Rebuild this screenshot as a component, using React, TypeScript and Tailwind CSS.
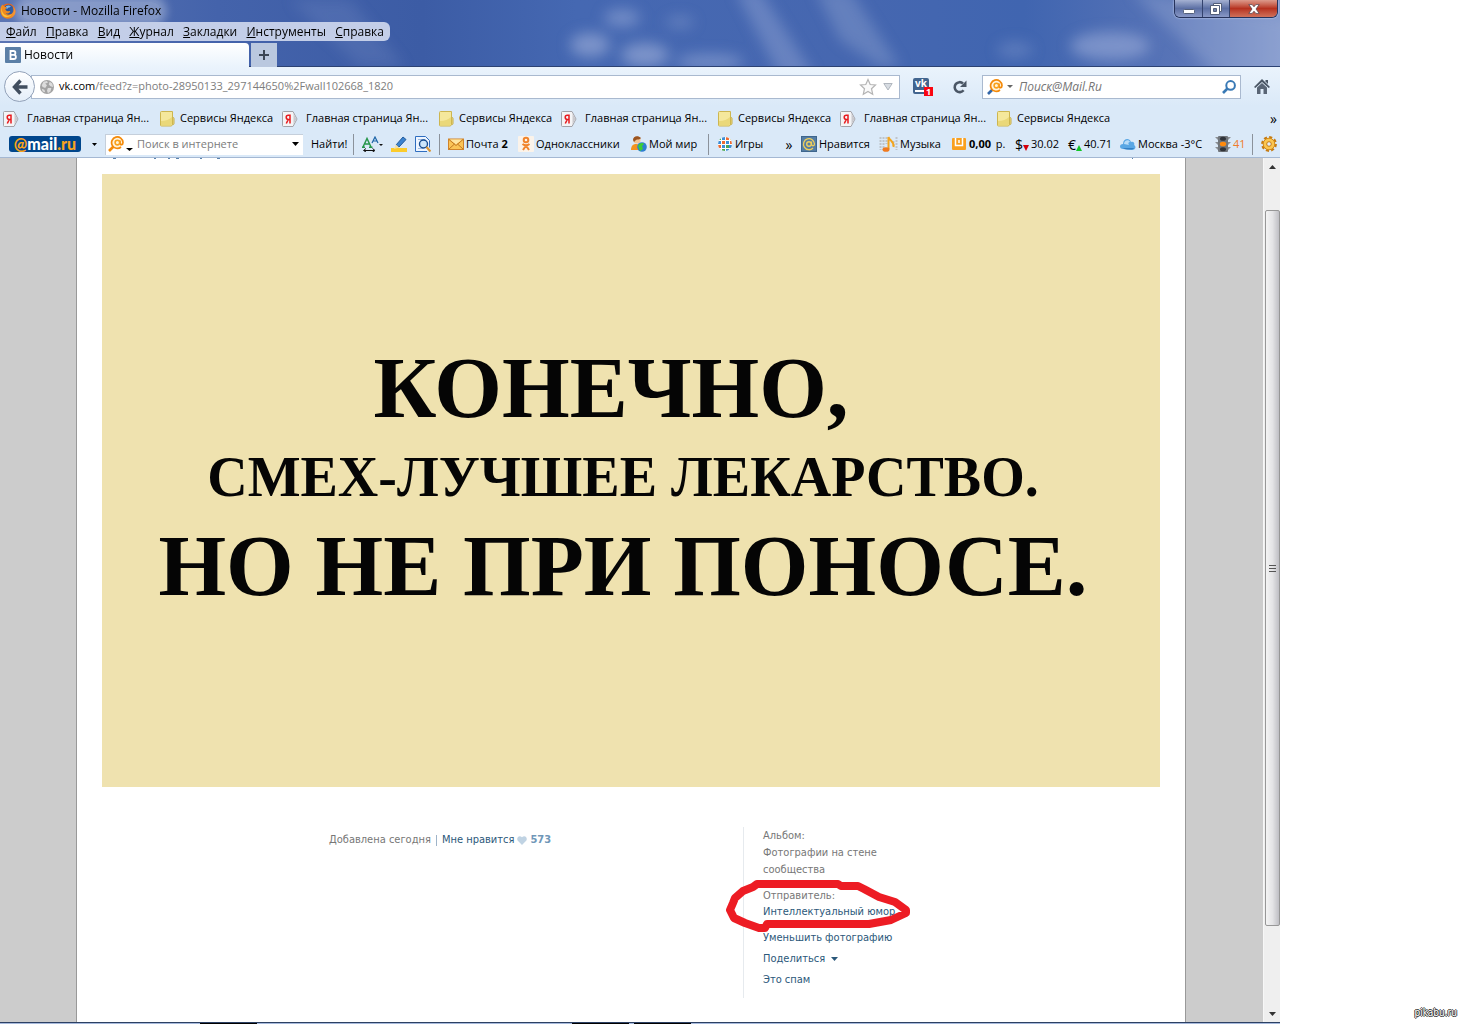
import type { ReactNode } from "react";

const menu = ["Файл", "Правка", "Вид", "Журнал", "Закладки", "Инструменты", "Справка"];

const bookmarks = [0, 1, 2, 3];

function FirefoxIcon() {
  return (
    <svg className="h-4 w-4 shrink-0" viewBox="0 0 16 16" aria-hidden="true">
      <circle cx="8" cy="8" r="7.6" fill="#e4661b" />
      <circle cx="8.6" cy="6.8" r="5" fill="#28549b" />
      <path d="M6 3c2-1 4-.6 5 .4-1 .2-1 1-2 1.200-1.500.2-1 1.400-2.400 1.600z" fill="#7fb4e8" />
      <path d="M.6 5C1 3.500 2 2 3 1.600c0 1 .6 1.600 1.600 1.800L7 4.500 5.400 6c.2 1.600 1.600 2.600 3.600 2 1-.2 1.600.4 1 1-1.200 1.600-3 1.800-4.400 1.200 2 2.600 6.400 2 7.800-1.400.6-1.800.2-3.600-.4-4.800 2.200 1.800 2.800 4.400 2 6.800-1.200 3.200-4 4.800-7 4.800C3.600 15.600-.6 11.500.6 5z" fill="#f08a1e" />
      <path d="M2 4c-.6 2.600.2 5.600 2 7.200 2.400 2 6 2 8-.2-1.800 3.400-6.400 4-9 1.400C1 10.500.8 6.500 2 4z" fill="#fbc53c" />
    </svg>
  );
}

function GlobeIcon() {
  return (
    <svg className="h-[14px] w-[14px] shrink-0" viewBox="0 0 16 16" aria-hidden="true">
      <circle cx="8" cy="8" r="8" fill="#a3a3a3" />
      <path d="M2 6l2-4 4-1 1 2-3 1 2 2-2 3-3-1zM11 2l3 2 1 4-3-1-2-2zM9 9l4 0-1 4-3 2-1-3zM2 10l3 1 1 3-3-1z" fill="#dcdcdc" />
    </svg>
  );
}

function YandexIcon() {
  return (
    <svg className="h-4 w-4 shrink-0" viewBox="0 0 16 16" aria-hidden="true">
      <path d="M1.500.5h9.500l4 7.500-4 7.500H1.500a1 1 0 0 1-1-1v-13a1 1 0 0 1 1-1z" fill="#f4f4f6" stroke="#a2a2a8" />
      <path d="M11.500 2.500l3 5.500-3 5.500z" fill="#c9c9ce" />
      <path d="M8 3.500v9M8 4.200H6.300a2 2 0 0 0 0 4.200H8M6.300 8.400L4.300 12.500" fill="none" stroke="#e8191d" strokeWidth="1.500" />
    </svg>
  );
}

function FolderIcon() {
  return (
    <svg className="h-4 w-4 shrink-0" viewBox="0 0 16 16" aria-hidden="true">
      <path d="M10 6.500h3a1 1 0 0 1 1 1v5a1 1 0 0 1-1 1h-3z" fill="#efdf8a" stroke="#c5ac45" />
      <path d="M.5 1.500a1 1 0 0 1 1-1h11v13l-1 1.500H1.500a1 1 0 0 1-1-1z" fill="#f5e89c" stroke="#cdb650" />
      <path d="M1 10c5 0 8-1.500 11-4v7l-1 1.500H1z" fill="#ead879" />
    </svg>
  );
}

function MailSearchIcon({ handle }: { handle: string }) {
  return (
    <svg className="h-4 w-4 shrink-0" viewBox="0 0 16 16" fill="none" aria-hidden="true">
      <path d="M5.500 10.500L1 15" stroke={handle} strokeWidth="2.600" />
      <circle cx="9.300" cy="6.600" r="5.600" fill="#fff3dc" />
      <path d="M13 11a5.700 5.700 0 1 1 2-4.500c0 2.500-3 2.800-3 .6V4.500" stroke="#f48a0a" strokeWidth="1.700" />
      <circle cx="9.400" cy="6.600" r="2.300" stroke="#f9a11b" strokeWidth="1.600" />
    </svg>
  );
}

function Caret({ className }: { className: string }) {
  return (
    <svg className={`shrink-0 ${className}`} viewBox="0 0 8 4" preserveAspectRatio="none" fill="currentColor" aria-hidden="true">
      <path d="M0 0h8L4 4z" />
    </svg>
  );
}

function Sky() {
  return (
    <svg className="absolute inset-0 h-full w-full" viewBox="0 0 1280 67" preserveAspectRatio="none" aria-hidden="true">
      <defs>
        <linearGradient id="sky">
          <stop offset="0" stopColor="#5b75b3" />
          <stop offset=".17" stopColor="#4463ab" />
          <stop offset=".33" stopColor="#3c5ca5" />
          <stop offset=".45" stopColor="#4568b2" />
          <stop offset=".66" stopColor="#4667b0" />
          <stop offset=".8" stopColor="#4065b0" />
          <stop offset=".92" stopColor="#5874b7" />
          <stop offset="1" stopColor="#7f95ca" />
        </linearGradient>
        <filter id="soft" filterUnits="userSpaceOnUse" x="-50" y="-50" width="1380" height="170">
          <feGaussianBlur stdDeviation="7" />
        </filter>
      </defs>
      <rect width="1280" height="67" fill="url(#sky)" />
      <g filter="url(#soft)" fill="#a9b8df">
        <path d="M290 0l70 67h45L350 0z" opacity=".15" />
        <path d="M735-10l45 87h35L760-10z" opacity=".35" />
        <path d="M815-10l25 50 40 27h20L850-10z" opacity=".3" />
        <ellipse cx="622" cy="18" rx="18" ry="9" opacity=".45" />
        <ellipse cx="590" cy="45" rx="20" ry="12" opacity=".55" />
        <ellipse cx="645" cy="55" rx="24" ry="12" opacity=".55" />
        <ellipse cx="710" cy="62" rx="34" ry="8" opacity=".45" />
        <ellipse cx="680" cy="22" rx="14" ry="6" opacity=".3" />
        <ellipse cx="1015" cy="50" rx="18" ry="9" opacity=".25" />
        <ellipse cx="1110" cy="46" rx="40" ry="14" opacity=".5" />
        <path d="M1130-10l90 87h80V20z" opacity=".3" />
      </g>
      <path d="M0 66.500h1280" stroke="#2c4273" />
    </svg>
  );
}

function WindowButtons() {
  return (
    <div className="mr-[2px] flex h-[18px] w-[104px] overflow-hidden rounded-b-md border border-t-0 border-[#26335c] shadow-[0_0_2px_#dbe4ff]">
      <button aria-label="Свернуть" className="flex w-7 items-center justify-center border-r border-[#34436e] bg-linear-to-b from-[#a5b1d2] via-[#5c6fa4] to-[#8998c6]">
        <svg className="mt-1 h-2 w-3" viewBox="0 0 12 8" aria-hidden="true"><rect x=".5" y="2.500" width="11" height="4" rx="1" fill="#fff" stroke="#535f7a" /></svg>
      </button>
      <button aria-label="Восстановить" className="flex w-[27px] items-center justify-center border-r border-[#34436e] bg-linear-to-b from-[#a5b1d2] via-[#5c6fa4] to-[#8998c6]">
        <svg className="h-3 w-3" viewBox="0 0 12 12" aria-hidden="true">
          <path d="M3.500.5h8v8h-8z" fill="#fff" stroke="#535f7a" />
          <path d="M.5 2.500h9v9h-9z" fill="#fff" stroke="#535f7a" />
          <path d="M3.500 5.500h3v3h-3z" fill="#7080aa" stroke="#535f7a" />
        </svg>
      </button>
      <button aria-label="Закрыть" className="flex flex-1 items-center justify-center bg-linear-to-b from-[#dc9a8c] via-[#b6311f] to-[#d0705a]">
        <svg className="h-[10px] w-3" viewBox="0 0 12 10" aria-hidden="true">
          <path d="M.8.600h3.400L6 2.800 7.800.600h3.400L8 5l3.200 4.400H7.800L6 7.200 4.200 9.400H.8L4 5z" fill="#fff" stroke="#5b4650" strokeWidth=".8" />
        </svg>
      </button>
    </div>
  );
}

function TitleArea() {
  return (
    <header className="relative h-[67px] shrink-0 overflow-hidden">
      <Sky />
      <div className="relative flex h-full flex-col">
        <div className="flex h-[22px] items-start justify-between">
          <div className="flex h-[22px] items-center gap-[5px]">
            <FirefoxIcon />
            <span className="rounded-full bg-white/30 text-[12px] shadow-[0_0_8px_6px_rgba(255,255,255,0.3)]">Новости - Mozilla Firefox</span>
          </div>
          <WindowButtons />
        </div>
        <nav className="flex h-[19px] w-[390px] items-center justify-between rounded-r-md bg-[#c3cee8] px-[6px] text-[12px]">
          {menu.map((m) => (
            <button key={m}>
              <span className="underline">{m[0]}</span>
              {m.slice(1)}
            </button>
          ))}
        </nav>
        <div className="mt-[2px] flex flex-1">
          <button className="flex w-[249px] items-center gap-[3px] rounded-tr-sm bg-linear-to-b from-white to-[#eaf3fc] pl-[5px] text-[12px]">
            <svg className="h-4 w-4" viewBox="0 0 16 16" aria-hidden="true">
              <rect width="16" height="16" rx="1" fill="#5b7fa6" />
              <path d="M5.500 4h3a1.900 1.900 0 0 1 0 3.800h-3zM5.500 7.800h3.300a2.100 2.100 0 0 1 0 4.200H5.500z" fill="none" stroke="#fff" strokeWidth="1.800" />
            </svg>
            Новости
          </button>
          <button aria-label="Новая вкладка" className="ml-[2px] flex w-[26px] items-center justify-center bg-[#bac8df]">
            <svg className="h-[10px] w-[10px]" viewBox="0 0 10 10" aria-hidden="true"><path d="M5 0v10M0 5h10" stroke="#3b4656" strokeWidth="2" /></svg>
          </button>
        </div>
      </div>
    </header>
  );
}

function NavBar() {
  return (
    <div className="flex h-[39px] shrink-0 items-center bg-linear-to-b from-[#eaf3fc] to-[#dae9f8] pl-1 text-[12px]">
      <button aria-label="Назад" className="z-10 flex h-[31px] w-[31px] shrink-0 items-center justify-center rounded-full border border-[#93a2b9] bg-linear-to-b from-white to-[#e4eef9]">
        <svg className="h-4 w-4" viewBox="0 0 16 16" aria-hidden="true"><path d="M8.500 1.500L2.500 8l6 6.500M3 8h12.500" fill="none" stroke="#414e5f" strokeWidth="3.400" /></svg>
      </button>
      <div className="-ml-1 flex h-6 flex-1 items-center border border-[#a9b9cf] bg-white pl-2 text-[11px]">
        <GlobeIcon />
        <span className="ml-[5px]">vk.com</span>
        <input aria-label="Адрес" defaultValue="/feed?z=photo-28950133_297144650%2Fwall102668_1820" className="min-w-0 flex-1 text-[#7d7d7d] outline-none" />
        <button aria-label="В закладки">
          <svg className="h-[18px] w-[18px]" viewBox="0 0 18 18" aria-hidden="true"><path d="M9 1.500l2.200 5 5.300.5-4 3.700 1.200 5.500L9 13.400l-4.700 2.800 1.200-5.500-4-3.700 5.300-.5z" fill="#fafafa" stroke="#b4b4b4" strokeWidth="1.200" /></svg>
        </button>
        <button aria-label="История" className="mx-[6px]">
          <svg className="h-2 w-[10px]" viewBox="0 0 10 8" aria-hidden="true"><path d="M.8.500h8.400L5 7z" fill="#d7dce2" stroke="#b0b6be" /></svg>
        </button>
      </div>
      <button aria-label="ВКонтакте, 1 уведомление" className="relative mt-[9px] ml-[13px] h-5 w-5 self-start">
        <span className="flex h-4 w-4 flex-col items-center justify-between rounded-xs bg-[#42658f] pb-[2px]">
          <span className="text-[10px] leading-[11px] font-bold text-white">vk</span>
          <span className="h-[2px] w-3 bg-white" />
        </span>
        <span className="absolute top-[11px] left-[11px] h-[9px] w-[9px] bg-[#fa0510] text-center text-[9px] leading-[9px] font-bold text-white">1</span>
      </button>
      <button aria-label="Обновить" className="ml-5">
        <svg className="h-[14px] w-[14px]" viewBox="0 0 14 14" aria-hidden="true">
          <path d="M10.600 10.300A5 5 0 1 1 10 3.400" fill="none" stroke="#4a5665" strokeWidth="2.600" />
          <path d="M13.500.5v6.500H7z" fill="#4a5665" />
        </svg>
      </button>
      <form className="ml-[15px] flex h-6 w-[259px] items-center border border-[#a9b9cf] bg-white px-1">
        <MailSearchIcon handle="#3266a8" />
        <Caret className="ml-1 h-[3px] w-[6px] text-[#666]" />
        <input aria-label="Поиск" placeholder="Поиск@Mail.Ru" className="ml-[6px] min-w-0 flex-1 italic outline-none placeholder:text-[#757575]" />
        <button aria-label="Искать" type="button">
          <svg className="h-[14px] w-[14px]" viewBox="0 0 14 14" fill="none" stroke="#3879b5" aria-hidden="true">
            <circle cx="8.600" cy="5.400" r="4.300" strokeWidth="2" />
            <path d="M5.500 8.500L1 13" strokeWidth="2.600" />
          </svg>
        </button>
      </form>
      <button aria-label="Домой" className="mr-[10px] ml-[13px]">
        <svg className="h-[15px] w-4" viewBox="0 0 16 15" aria-hidden="true">
          <path d="M8 0l8 8-1.300 1L8 3 1.300 9 0 8z" fill="#4a5665" />
          <path d="M11.500 1H14v4l-2.500-2.500z" fill="#4a5665" />
          <path d="M8 4l5 4.500V15H9.500v-5h-3v5H3V8.500z" fill="#596575" />
        </svg>
      </button>
    </div>
  );
}

function BookmarksBar() {
  return (
    <div className="flex h-[25px] shrink-0 items-center bg-[#dae9f8] pl-[3px] text-[11px]">
      {bookmarks.map((b) => (
        <div key={b} className="flex">
          <a href="#yandex" className="flex w-[157px] items-center gap-2 whitespace-nowrap"><YandexIcon />Главная страница Ян...</a>
          <a href="#services" className="flex w-[122px] items-center gap-1 whitespace-nowrap"><FolderIcon />Сервисы Яндекса</a>
        </div>
      ))}
      <button aria-label="Ещё закладки" className="mr-[3px] ml-auto text-[14px]">»</button>
    </div>
  );
}

function Tool({ className, icon, children }: { className: string; icon: ReactNode; children?: ReactNode }) {
  return (
    <button className={`flex shrink-0 items-center gap-[2px] whitespace-nowrap *:shrink-0 ${className}`}>
      {icon}
      {children}
    </button>
  );
}

function Divider() {
  return <span className="h-[21px] w-px shrink-0 bg-[#8b929b]" />;
}

function MailBar() {
  return (
    <div className="flex h-[27px] shrink-0 items-center gap-2 border-b border-[#a4b8d3] bg-[#dae9f8] pr-[3px] pl-[9px] text-[11px]">
      <button className="h-4 w-[72px] shrink-0 rounded-[3px] bg-[#00468c] text-center font-[Lato] text-[16px] leading-[14px] font-black text-white">
        <span className="text-[#f7a21b]">@</span>mail<span className="text-[#f7a21b]">.ru</span>
      </button>
      <button aria-label="Меню Mail.Ru" className="flex w-2 justify-end"><Caret className="h-[3px] w-[5px]" /></button>
      <form className="flex h-[21px] w-[198px] shrink-0 items-center bg-white pl-[3px] shadow-[inset_1px_1px_0_#c5cfdb]">
        <MailSearchIcon handle="#f48a0a" />
        <Caret className="mt-[11px] ml-[2px] h-[3px] w-[7px]" />
        <input aria-label="Поиск в интернете" placeholder="Поиск в интернете" className="ml-1 min-w-0 flex-1 outline-none placeholder:text-[#7c7c7c]" />
        <button aria-label="Варианты" type="button"><Caret className="mr-1 h-1 w-[7px]" /></button>
      </form>
      <button className="w-[34px] whitespace-nowrap">Найти!</button>
      <Divider />
      <Tool className="w-[21px]" icon={
        <svg className="h-4 w-[21px]" viewBox="0 0 21 16" fill="none" aria-label="Размер шрифта">
          <path d="M1 11L5 2.500 9 11M3 8h4.500M0 11.300h3M7 11.300h3.500" stroke="#26964a" strokeWidth="1.500" />
          <path d="M10 7l3-6 3 6M11.300 5h3.400" stroke="#1d65a8" strokeWidth="1.200" />
          <path d="M2 14.500h10M4 12.500l-2.500 2L4 16M10.500 12.500l2.500 2-2.500 1.500" stroke="#111" />
          <path d="M17 8h4l-2 2z" fill="#111" />
        </svg>
      } />
      <Tool className="w-4" icon={
        <svg className="h-4 w-4" viewBox="0 0 16 16" aria-label="Выделить">
          <path d="M0 12h16v4H0z" fill="#fbcb2c" />
          <path d="M5 9l7-8 3 2.500L8 11z" fill="#3c83cf" stroke="#225b9b" />
          <path d="M5 8.500L8 11.500l-5 1.500z" fill="#f3dfa4" />
        </svg>
      } />
      <Tool className="w-4" icon={
        <svg className="h-4 w-4" viewBox="0 0 16 16" fill="none" aria-label="Найти на странице">
          <path d="M12 15.500H.5V.5h10l4 4v7" fill="#eef5ff" stroke="#2f6ec0" />
          <path d="M3 3.500h7M3 12.500h5" stroke="#9dbbe2" />
          <circle cx="8.500" cy="8" r="4" fill="#cce6fb" stroke="#184e91" strokeWidth="1.400" />
          <path d="M11.500 11l4 4.500" stroke="#d89536" strokeWidth="2.200" />
        </svg>
      } />
      <Divider />
      <Tool className="w-[62px]" icon={
        <svg className="h-4 w-4" viewBox="0 0 16 16" aria-hidden="true">
          <rect x=".5" y="3" width="15" height="10.500" fill="#fbc457" stroke="#d0842b" />
          <path d="M2 3.500h12L8 8.500z" fill="#ffe5a2" />
          <path d="M1 3.500l7 6 7-6M1 13l5.500-5M15 13L9.500 8" fill="none" stroke="#c27823" />
        </svg>
      }>Почта <b className="ml-px">2</b></Tool>
      <Tool className="w-[105px]" icon={
        <svg className="h-4 w-4" viewBox="0 0 16 16" fill="none" stroke="#f0842c" strokeWidth="2" aria-hidden="true">
          <rect width="16" height="16" rx="1" fill="#fbf3ea" stroke="none" />
          <circle cx="8" cy="4" r="2.300" />
          <path d="M4.500 8c2 1.600 5 1.600 7 0M8 9.500L5 14M8 9.500l3 4.500" />
        </svg>
      }>Одноклассники</Tool>
      <Tool className="w-[69px]" icon={
        <svg className="h-4 w-4" viewBox="0 0 16 16" aria-hidden="true">
          <path d="M0 14c0-4 2-6 5-6s6 2 6 6z" fill="#f29320" />
          <circle cx="6" cy="4" r="3.600" fill="#f4c594" />
          <path d="M2 4c0-4 5-5 8-2-1 2-4 1-5 2L3 6z" fill="#9a5420" />
          <circle cx="11" cy="11" r="4.800" fill="#2d7fd0" />
          <path d="M7 10c1-3 5-4 6-2l-2 2 1 3-3 2z" fill="#3bcf32" />
        </svg>
      }>Мой мир</Tool>
      <Divider />
      <Tool className="w-12" icon={
        <svg className="h-4 w-4" viewBox="0 0 16 16" aria-hidden="true">
          <defs>
            <clipPath id="ball"><circle cx="8" cy="8" r="7" /></clipPath>
          </defs>
          <g clipPath="url(#ball)">
            <rect width="16" height="16" fill="#fff" />
            <path d="M5 0h3v4H5zM1 5h3v3H1zM9 5h3v3H9zM5 9h3v3H5zM12 9h3v3h-3zM9 13h3v3H9z" fill="#3c8ed6" />
            <path d="M9 0h3v4H9zM5 5h3v3H5zM1 9h3v3H1zM13 5h3v3h-3z" fill="#ee6b31" />
            <path d="M1 1h3v3H1zM9 9h3v3H9zM5 13h3v3H5z" fill="#4aa653" />
            <path d="M13 1h3v3h-3zM1 13h3v3H1z" fill="#f2bb33" />
          </g>
        </svg>
      }>Игры</Tool>
      <button aria-label="Ещё" className="ml-auto w-2 text-[14px]">»</button>
      <Tool className="w-[70px]" icon={
        <svg className="h-4 w-4" viewBox="0 0 16 16" fill="none" aria-hidden="true">
          <rect x=".5" y=".5" width="15" height="15" fill="#557da3" stroke="#3e668d" />
          <circle cx="8" cy="8" r="2.300" stroke="#f0cf5b" strokeWidth="1.400" />
          <path d="M12 12a5.500 5.500 0 1 1 1.500-4c0 2.400-3 2.400-3 0V5.500" stroke="#f0cf5b" strokeWidth="1.300" />
        </svg>
      }>Нравится</Tool>
      <Tool className="w-[65px]" icon={
        <svg className="h-4 w-[19px]" viewBox="0 0 19 16" fill="none" aria-hidden="true">
          <path d="M1.500 1v13M4.500 1v13M7.500 1v7M14.500 5v6M17.500 1v13" stroke="#bfc4ca" strokeWidth="2" strokeDasharray="2 1" />
          <path d="M9.500 13V1c1 4 6 4 5 10" stroke="#f3a51d" strokeWidth="2" />
          <ellipse cx="7" cy="13.500" rx="3.500" ry="2.300" fill="#f07a20" />
        </svg>
      }>Музыка</Tool>
      <Tool className="w-[55px]" icon={
        <svg className="mr-px h-[14px] w-[14px]" viewBox="0 0 14 14" fill="none" aria-hidden="true">
          <rect y="1" width="14" height="12" rx="1" fill="#f9a01f" />
          <path d="M3.500 1v7.500h7V1M7 3v3" stroke="#fff" strokeWidth="1.500" />
        </svg>
      }><b>0,00</b>&nbsp;р.</Tool>
      <Tool className="w-[45px]" icon={<span className="text-[14px]">$</span>}>
        <Caret className="mt-2 -ml-[2px] h-[6px] w-[6px] text-[#d4000c]" />30.02
      </Tool>
      <Tool className="w-[44px]" icon={<span className="text-[14px]">€</span>}>
        <Caret className="mt-2 -ml-[2px] h-[6px] w-[6px] rotate-180 text-[#11c625]" />40.71
      </Tool>
      <Tool className="w-[87px]" icon={
        <svg className="h-4 w-4" viewBox="0 0 16 16" aria-hidden="true">
          <path d="M3 13c-4 0-4-5 0-5 0-5 6-7 8-2 3-1 4 2 3 3 3 2 1 5-2 5z" fill="#5aa7e4" />
          <path d="M4 8c0-4 5-5 6-2-2 0-2 2-1 3z" fill="#b9dcf8" />
          <path d="M3 12h11c0 2-9 2-11 0z" fill="#3380c6" />
        </svg>
      }>Москва -3°C</Tool>
      <Tool className="w-[29px] text-[#f07b2a]" icon={
        <svg className="h-4 w-4" viewBox="0 0 16 16" aria-hidden="true">
          <path d="M0 1h16l-3 3H3zM0 6h16l-3 3H3zM0 11h16l-3 3H3z" fill="#8b8f94" />
          <rect x="3" width="10" height="16" rx="1" fill="#70757b" />
          <ellipse cx="8" cy="2.800" rx="3" ry="2" fill="#30343a" />
          <ellipse cx="8" cy="8" rx="3.200" ry="2.300" fill="#ff8a0d" />
          <ellipse cx="8" cy="13.200" rx="3" ry="2" fill="#30343a" />
        </svg>
      }>41</Tool>
      <Divider />
      <Tool className="w-4" icon={
        <svg className="h-4 w-4" viewBox="0 0 16 16" fill="none" aria-label="Настройки">
          <circle cx="8" cy="8" r="6.600" stroke="#c67b12" strokeWidth="2.600" strokeDasharray="3 2.180" />
          <circle cx="8" cy="8" r="5.800" fill="#fbc650" stroke="#d08a1c" />
          <circle cx="8" cy="8" r="2.300" fill="#e3effb" stroke="#c67b12" />
        </svg>
      } />
    </div>
  );
}

function Photo() {
  return (
    <figure className="flex h-[613px] flex-col items-center bg-[#efe2af] pt-[166px] pr-[16px] font-['Liberation_Serif'] font-bold whitespace-nowrap text-[#050505]">
      <p className="pr-6 text-[87px] leading-[96px]">КОНЕЧНО,</p>
      <p className="text-[56px] leading-[82px]">СМЕХ-ЛУЧШЕЕ ЛЕКАРСТВО.</p>
      <p className="text-[87px] leading-[96px]">НО НЕ ПРИ ПОНОСЕ.</p>
    </figure>
  );
}

function PhotoInfo() {
  return (
    <div className="mx-auto mt-10 flex w-[604px] font-[Tahoma,'DejaVu_Sans_Condensed',sans-serif] text-[11px] text-[#777]">
      <div className="flex h-[26px] flex-1 items-center whitespace-nowrap">
        Добавлена сегодня
        <span className="mx-[5px] h-[11px] w-px bg-[#9fb4c9]" />
        <button className="flex items-center text-[#2b587a]">
          Мне нравится
          <svg className="mx-[3px] h-[9px] w-[10px]" viewBox="0 0 10 9" aria-hidden="true"><path d="M5 9L.6 4.500C-.8 2 2 -1.200 5 1.200 8-1.200 10.800 2 9.400 4.500z" fill="#c0d3e3" /></svg>
          <b className="text-[#6f97b8]">573</b>
        </button>
      </div>
      <aside className="relative h-[171px] w-[190px] border-l border-[#e6eaee] pt-px pl-[19px] leading-[16px]">
        <p>Альбом:</p>
        <p className="w-[130px] leading-[17px]">Фотографии на стене сообщества</p>
        <p className="mt-[10px]">Отправитель:</p>
        <a href="#group" className="block whitespace-nowrap text-[#2b587a]">Интеллектуальный юмор</a>
        <div className="mt-[7px] flex flex-col items-start leading-[21px] text-[#2b587a]">
          <button>Уменьшить фотографию</button>
          <button className="flex items-center gap-[6px]">Поделиться <Caret className="h-1 w-[7px]" /></button>
          <button>Это спам</button>
        </div>
        <svg className="pointer-events-none absolute top-[52px] left-[-20px] h-[54px] w-[190px]" viewBox="0 0 190 54" fill="none" stroke="#ed1c24" strokeWidth="8" strokeLinecap="round" strokeLinejoin="round" aria-hidden="true">
          <path d="M33 5h81l3 2h17l6 3 15 8 16 5 11 8v3l-15 7-22 4H43l-2 4h-6l-14-5-11-5-4-8 3-7 2-5 8-7 10-4z" />
        </svg>
      </aside>
    </div>
  );
}

function Scrollbar() {
  return (
    <div className="flex w-[17px] shrink-0 flex-col items-center border-l border-[#f7f7f7] bg-[#efefef]" aria-hidden="true">
      <span className="flex h-[17px] shrink-0 items-center"><Caret className="h-1 w-[7px] rotate-180 text-[#333]" /></span>
      <span className="flex-[35]" />
      <span className="flex w-[15px] flex-[718] flex-col items-center justify-center gap-[2px] rounded-xs border border-[#979797] bg-linear-to-r from-[#f4f4f4] via-[#e4e4e6] to-[#bfbfc4]">
        <span className="h-px w-[7px] bg-[#555]" />
        <span className="h-px w-[7px] bg-[#555]" />
        <span className="h-px w-[7px] bg-[#555]" />
      </span>
      <span className="flex-[79]" />
      <span className="flex h-[17px] shrink-0 items-center"><Caret className="h-1 w-[7px] text-[#333]" /></span>
    </div>
  );
}

export default function App() {
  return (
    <div className="flex min-h-screen bg-white font-['Open_Sans',sans-serif] text-black">
      <div className="flex min-w-0 flex-1 flex-col">
        <TitleArea />
        <NavBar />
        <BookmarksBar />
        <MailBar />
        <div className="flex flex-1">
          <div className="flex flex-1 bg-[#ccc] pr-[77px] pl-[76px]">
            <main className="flex-1 border-x border-[#999] bg-white px-[25px]">
              <svg className="block h-4 w-full" fill="#5a83ad" aria-hidden="true">
                <path d="M11 0h3v1h-3zM52 0h2v1h-2zM66 0h2v1h-2zM74 0h3v1h-3zM98 0h2v1h-2zM115 0h3v1h-3zM1030 0h1v1h-1z" />
              </svg>
              <Photo />
              <PhotoInfo />
            </main>
          </div>
          <Scrollbar />
        </div>
        <div className="flex h-[2px] shrink-0 border-t border-[#2c4063] bg-[#a6b9dc]">
          <span className="ml-[200px] h-px w-[57px] bg-black" />
          <span className="ml-[315px] h-px w-[57px] bg-black" />
          <span className="ml-[5px] h-px w-[57px] bg-black" />
        </div>
      </div>
      <footer className="flex w-[181px] shrink-0 items-end justify-end pr-1 pb-1 font-['DejaVu_Sans_Condensed'] text-[10px] leading-[14px] text-white [text-shadow:1px_0_#333,-1px_0_#333,0_1px_#333,0_-1px_#333]">
        pikabu.ru
      </footer>
    </div>
  );
}
